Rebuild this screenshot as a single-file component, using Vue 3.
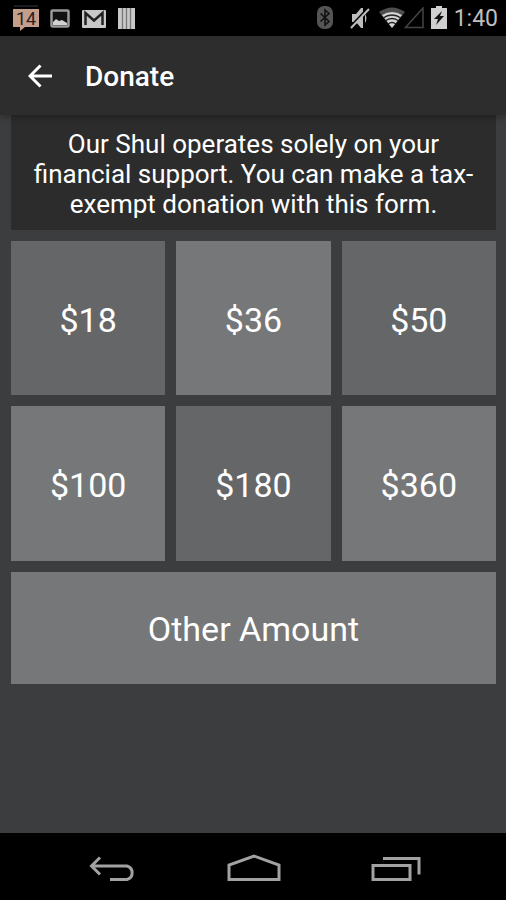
<script setup>
const amounts = [
    { value: 18, light: false },
    { value: 36, light: true },
    { value: 50, light: false },
    { value: 100, light: true },
    { value: 180, light: false },
    { value: 360, light: true }
]
</script>

<template>
    <div class="screen">
        <div class="status-bar">
            <div class="status-group notifications">
                <svg class="calendar" width="28" height="28" viewBox="0 0 28 28">
                    <path d="M2 1h24" stroke="#20242e" stroke-width="1.5"/>
                    <path d="M1 4h26v18H13l-5 4v-4H1z" fill="#c49d8b"/>
                    <text x="14" y="20" text-anchor="middle">14</text>
                </svg>
                <svg width="20" height="20" viewBox="0 0 20 20">
                    <rect x="1.5" y="1.5" width="17" height="16" rx="1" fill="#111" stroke="#999" stroke-width="2.5"/>
                    <path d="M3 16v-3l3-3 3 2 3-1 5 3v2z" fill="#d0d0d0"/>
                </svg>
                <svg width="24" height="20" viewBox="0 0 24 20">
                    <rect width="24" height="18" y="1" rx="1" fill="#c8c8c8"/>
                    <path d="M3.5 16V4L12 11.5 20.5 4v12" fill="none" stroke="#222" stroke-width="2.5"/>
                </svg>
                <svg width="18" height="22" viewBox="0 0 18 22">
                    <rect width="17" height="21" fill="#c8c8c8"/>
                    <path d="M4.5 0v21M8.5 0v21M12.5 0v21" stroke="#777" stroke-width="1.3"/>
                </svg>
            </div>
            <div class="status-group system">
                <svg width="16" height="24" viewBox="0 0 16 24">
                    <rect width="16" height="23" rx="7" fill="#555"/>
                    <path d="M3.5 7.5l8.5 8-4 3.5V4l4 3.5-8.5 8" fill="none" stroke="#111" stroke-width="1.6"/>
                </svg>
                <svg class="muted" width="20" height="24" viewBox="0 0 20 24">
                    <path d="M2 8h4l5-6h2v20h-2l-5-6H2zM15 8q3 4 0 9z" fill="#bdbdbd"/>
                    <path d="M0 21L18 2" stroke="#000" stroke-width="2"/>
                    <path d="M1 22L19 3" stroke="#bdbdbd" stroke-width="2"/>
                </svg>
                <svg class="wifi" width="26" height="22" viewBox="0 0 26 22">
                    <path d="M0 5Q13-4 26 5L13 21z" fill="#4d4d4d"/>
                    <path d="M3 8Q13 2 23 8L13 21z" fill="#d2d2d2"/>
                    <path d="M4 11Q13 5 22 11M6 14q7-5 14 0M9 17q4-3 8 0" fill="none" stroke="#222" stroke-width="1.3"/>
                </svg>
                <svg class="signal" width="20" height="22" viewBox="0 0 20 22">
                    <path d="M1.5 20.5L19 1v19.500z" fill="none" stroke="#444" stroke-width="1.5"/>
                </svg>
                <svg class="battery" width="16" height="24" viewBox="0 0 16 24">
                    <path d="M5 0h6v2h5v21H0V2h5z" fill="#cfcfcf"/>
                    <path d="M11 5L3 13h4l-2 6 8-9H9z" fill="#111"/>
                </svg>
                <span class="clock">1:40</span>
            </div>
        </div>

        <header class="app-bar">
            <button class="back" aria-label="Back">
                <svg width="24" height="24" viewBox="0 0 24 24">
                    <path d="M12.5 1.5L2 12l10.5 10.5M2 12h22" fill="none" stroke="#fff" stroke-width="3"/>
                </svg>
            </button>
            <h1>Donate</h1>
        </header>

        <main>
            <p class="notice">Our Shul operates solely on your financial support. You can make a tax-exempt donation with this form.</p>
            <div class="amounts">
                <button
                    v-for="amount in amounts"
                    :key="amount.value"
                    class="tile"
                    :class="{ light: amount.light }"
                >${{ amount.value }}</button>
                <button class="tile light other">Other Amount</button>
            </div>
        </main>

        <nav class="nav-bar">
            <button aria-label="Back">
                <svg width="48" height="28" viewBox="0 0 48 28">
                    <path d="M11 3.5L2.500 12l8.500 8.500M3 12h35a7 7 0 0 1 0 13.500H21" fill="none" stroke="#a2a2a2" stroke-width="3"/>
                </svg>
            </button>
            <button aria-label="Home">
                <svg width="54" height="28" viewBox="0 0 54 28">
                    <path d="M2 25.5V11L27 2l25 9v14.500z" fill="none" stroke="#a2a2a2" stroke-width="3"/>
                </svg>
            </button>
            <button aria-label="Recent apps">
                <svg width="50" height="28" viewBox="0 0 50 28">
                    <path d="M2 11.5h37v14H2zM12 4.500h36v16" fill="none" stroke="#a2a2a2" stroke-width="3"/>
                </svg>
            </button>
        </nav>
    </div>
</template>

<style>
body {
    margin: 0;
    background: #3c3d3f;
}
</style>

<style scoped>
.screen {
    display: flex;
    flex-direction: column;
    min-height: 100vh;
    background: #3c3d3f;
    color: #fff;
    font-family: Roboto, sans-serif;
}

svg {
    display: block;
}

button {
    border: 0;
    padding: 0;
    background: none;
    color: inherit;
    font-family: inherit;
    cursor: pointer;
}

.status-bar {
    display: flex;
    align-items: center;
    justify-content: space-between;
    height: 36px;
    padding: 0 8px 0 12px;
    background: #000;
}

.status-group {
    display: flex;
    align-items: center;
}

.notifications {
    gap: 12px;
    padding-top: 2px;
}

.calendar {
    margin-right: -2px;
}

.calendar text {
    font-size: 18px;
    fill: #2c211d;
}

.muted {
    margin-left: 17px;
}

.wifi {
    margin-left: 9px;
}

.signal {
    margin-left: -1px;
}

.battery {
    margin-left: 7px;
}

.clock {
    margin-left: 7px;
    padding-top: 2px;
    font-size: 23px;
    line-height: 34px;
    color: #bebebe;
}

.app-bar {
    position: relative;
    display: flex;
    align-items: center;
    gap: 33px;
    height: 79px;
    padding: 0 28px;
    background: #2d2d2d;
    box-shadow: 0 2px 8px rgba(0, 0, 0, 0.3);
}

.app-bar h1 {
    margin: 0;
    padding-top: 2px;
    font-size: 28px;
    font-weight: 500;
    line-height: 36px;
}

main {
    flex: 1;
    padding: 0 10px 11px 11px;
}

.notice {
    margin: 0 0 11px;
    padding: 14px 20px 11px;
    background: #2c2c2c;
    font-size: 26px;
    line-height: 30px;
    text-align: center;
}

.amounts {
    display: grid;
    grid-template-columns: repeat(3, 1fr);
    gap: 11px;
}

.tile {
    aspect-ratio: 1;
    padding-top: 4px;
    background: #656668;
    font-size: 34px;
    line-height: 40px;

    &.light {
        background: #767779;
    }

    &.other {
        grid-column: 1 / -1;
        aspect-ratio: auto;
        padding: 37px 0 35px;
    }
}

.nav-bar {
    box-sizing: border-box;
    display: flex;
    align-items: center;
    justify-content: space-between;
    height: 67px;
    padding: 3px 85px 0 89px;
    background: #000;
}
</style>
